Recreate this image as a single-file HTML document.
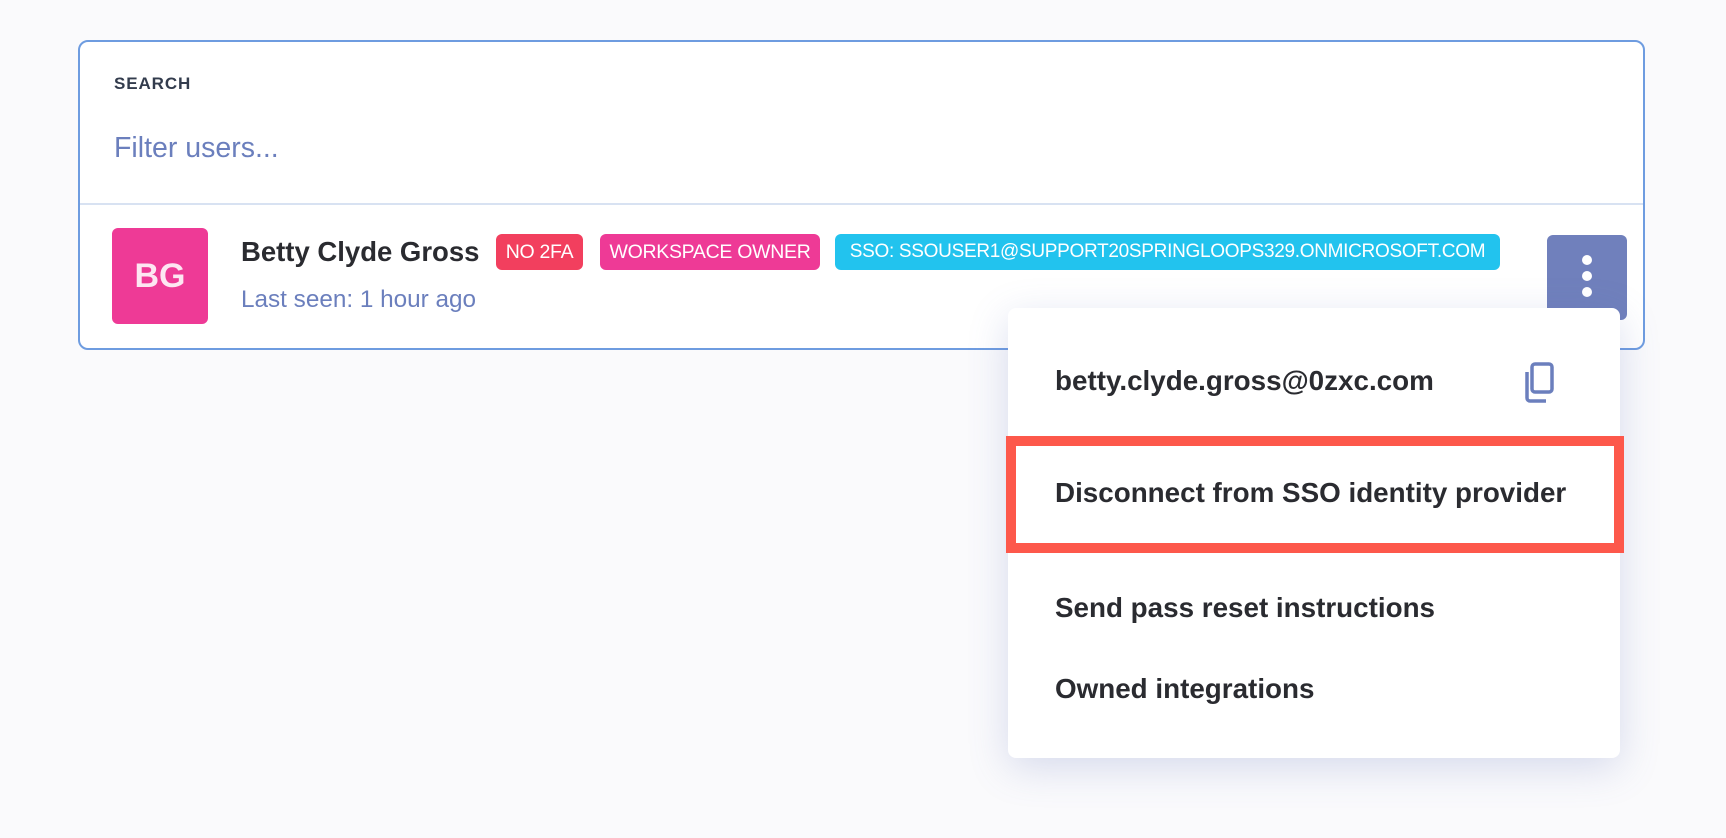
<!DOCTYPE html>
<html><head><meta charset="utf-8"><style>
*{box-sizing:border-box;margin:0;padding:0}
body{width:1726px;height:838px;background:#fafafc;font-family:"Liberation Sans",sans-serif;position:relative;overflow:hidden;color:#2a2b30}
.card{position:absolute;left:78px;top:40px;width:1567px;height:310px;background:#fff;border:2px solid #6e9ce0;border-radius:10px}
.lbl{position:absolute;left:34px;top:32px;font-size:17px;font-weight:bold;color:#333c4d;letter-spacing:.9px}
.filter{position:absolute;left:34px;top:90px;font-size:28.5px;color:#6b7fbd}
.div{position:absolute;left:0;right:0;top:161px;height:2px;background:#d8e2f2}
.av{position:absolute;left:112px;top:228px;width:96px;height:96px;background:#ee3a96;border-radius:6px;color:#fde6f2;font-weight:bold;font-size:34px;text-align:center;line-height:96px}
.name{position:absolute;left:241px;top:236px;font-size:27.5px;font-weight:bold;color:#2a2b30}
.seen{position:absolute;left:241px;top:286px;font-size:24.3px;color:#6b7fbd}
.b{position:absolute;top:234px;height:36px;border-radius:6px;color:#fff;font-size:19.5px;line-height:36px;text-align:center;white-space:nowrap;letter-spacing:-.3px}
.keb{position:absolute;left:1547px;top:235px;width:80px;height:85px;background:#7080bc;border-radius:6px}
.keb i{position:absolute;left:35px;width:10px;height:10px;border-radius:50%;background:#fff}
.menu{position:absolute;left:1008px;top:308px;width:612px;height:450px;background:#fff;border-radius:8px;box-shadow:0 10px 40px rgba(90,110,180,.22)}
.mi{position:absolute;left:47px;font-size:27.8px;font-weight:bold;color:#2a2b30;white-space:nowrap}
.red{position:absolute;left:1006px;top:436px;width:618px;height:117px;border:10px solid #fd584b}
</style></head><body>
<div class="card">
<div class="lbl">SEARCH</div>
<div class="filter">Filter users...</div>
<div class="div"></div>
</div>
<div class="av">BG</div>
<div class="name">Betty Clyde Gross</div>
<div class="seen">Last seen: 1 hour ago</div>
<div class="b" style="left:496px;width:87px;background:#f23f5e">NO 2FA</div>
<div class="b" style="left:600px;width:220px;background:#ee3a96">WORKSPACE OWNER</div>
<div class="b" style="left:835px;width:665px;background:#22c3ee;font-size:19px">SSO: SSOUSER1@SUPPORT20SPRINGLOOPS329.ONMICROSOFT.COM</div>
<div class="keb"><i style="top:20px"></i><i style="top:36px"></i><i style="top:52px"></i></div>
<div class="menu">
<div class="mi" style="top:57px">betty.clyde.gross@0zxc.com</div>
<svg style="position:absolute;left:514px;top:54px" width="36" height="42" viewBox="0 0 36 42"><rect x="10" y="2" width="20" height="28" rx="3" fill="none" stroke="#6b7fbd" stroke-width="3.5"/><path d="M5 10 V36 a3 3 0 0 0 3 3 H24" fill="none" stroke="#6b7fbd" stroke-width="3.5"/></svg>
<div class="mi" style="top:169px">Disconnect from SSO identity provider</div>
<div class="mi" style="top:284px">Send pass reset instructions</div>
<div class="mi" style="top:365px">Owned integrations</div>
</div>
<div class="red"></div>
</body></html>
